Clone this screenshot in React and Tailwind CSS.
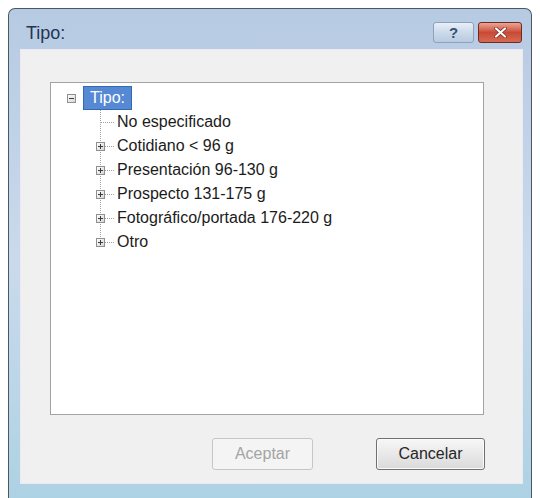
import { useId } from 'react';

const font = { fontFamily: '"Liberation Sans", Arial, sans-serif' };

function ExpandBox({ open = false }) {
  const id = useId();
  return (
    <svg width="9" height="9" viewBox="0 0 9 9" className="shrink-0">
      <defs>
        <linearGradient id={id} x1="0" y1="0" x2="1" y2="1">
          <stop offset="0" stopColor="#ffffff" />
          <stop offset="1" stopColor="#d4d4d4" />
        </linearGradient>
      </defs>
      <rect x="0.5" y="0.5" width="8" height="8" fill={`url(#${id})`} stroke="#8f8f8f" />
      <line x1="2" x2="7" y1="4.5" y2="4.5" stroke="#3c3c3c" />
      {!open && <line x1="4.5" x2="4.5" y1="2" y2="7" stroke="#3c3c3c" />}
    </svg>
  );
}

function Connector({ box, last }) {
  const id = useId();
  return (
    <svg width="28" height="24" viewBox="0 0 28 24" className="shrink-0">
      <defs>
        <linearGradient id={id} x1="0" y1="0" x2="1" y2="1">
          <stop offset="0" stopColor="#ffffff" />
          <stop offset="1" stopColor="#d4d4d4" />
        </linearGradient>
      </defs>
      <line x1="14.5" x2="14.5" y1="0" y2={last ? 12.5 : 24} stroke="#a3a3a3" strokeDasharray="1 1" />
      <line x1={box ? 19 : 15} x2="28" y1="12.5" y2="12.5" stroke="#a3a3a3" strokeDasharray="1 1" />
      {box && (
        <>
          <rect x="10.5" y="8.5" width="8" height="8" fill={`url(#${id})`} stroke="#8f8f8f" />
          <line x1="12" x2="17" y1="12.5" y2="12.5" stroke="#3c3c3c" />
          <line x1="14.5" x2="14.5" y1="10" y2="15" stroke="#3c3c3c" />
        </>
      )}
    </svg>
  );
}

const items = [
  { label: 'No especificado', box: false },
  { label: 'Cotidiano < 96 g', box: true },
  { label: 'Presentación 96-130 g', box: true },
  { label: 'Prospecto 131-175 g', box: true },
  { label: 'Fotográfico/portada 176-220 g', box: true },
  { label: 'Otro', box: true },
];

export default function App() {
  return (
    <div className="h-[498px] w-[540px] overflow-hidden bg-white pl-[8px] pt-[8px]" style={font}>
      <div className="h-[500px] w-[524px] rounded-t-[7px] border border-b-0 border-[#4a5766] bg-gradient-to-b from-[#b6cae2] via-[#cadaec] to-[#acd2e3]">
        {/* title bar */}
        <div className="flex h-[40px] items-start justify-between pl-[17px] pr-[9px]">
          <span className="mt-[14px] text-[18px] leading-[20px] text-[#1f3653]">Tipo:</span>
          <div className="mt-[13px] flex gap-[4px]">
            <div className="flex h-[21px] w-[41px] items-center justify-center rounded-[3px] border border-[#8fa1b8] bg-gradient-to-b from-[#e8eff8] via-[#ccdaeb] to-[#b7cbe1] text-[15px] font-bold leading-none text-[#3a506c]">
              ?
            </div>
            <div className="flex h-[21px] w-[44px] items-center justify-center rounded-[3px] border border-[#6f2b22] bg-gradient-to-b from-[#eaa597] via-[#c84a36] to-[#d66a52]">
              <svg width="13" height="11" viewBox="0 0 13 11">
                <path d="M2 1.5 L11 9.5 M11 1.5 L2 9.5" stroke="#7a2a20" strokeWidth="3.6" strokeLinecap="round" />
                <path d="M2 1.5 L11 9.5 M11 1.5 L2 9.5" stroke="#ffffff" strokeWidth="2.2" strokeLinecap="round" />
              </svg>
            </div>
          </div>
        </div>

        {/* client area */}
        <div className="ml-[11px] flex h-[435px] w-[503px] flex-col border border-[#ebe9f5] bg-[#f0f0f0]">
          <div className="ml-[29px] mt-[32px] h-[333px] w-[434px] border border-[#a3a3a3] bg-white pt-[3px] text-[16px] text-[#1b1b1b]">
            <div className="flex h-[24px] items-center pl-[16px]">
              <ExpandBox open />
              <span className="ml-[7px] flex h-[24px] items-center border border-[#3467b4] bg-[#5689d3] px-[6px] text-white">
                Tipo:
              </span>
            </div>
            {items.map((it, i) => (
              <div key={it.label} className="flex h-[24px] items-center pl-[35px]">
                <Connector box={it.box} last={i === items.length - 1} />
                <span className="ml-[3px] whitespace-nowrap">{it.label}</span>
              </div>
            ))}
          </div>

          <div className="mt-[23px] flex justify-end gap-[63px] pr-[37px] text-[16px]">
            <div className="flex h-[32px] w-[101px] items-center justify-center rounded-[3px] border border-[#c6c6c6] bg-[#f4f4f4] text-[#a4a4a4]">
              Aceptar
            </div>
            <div className="flex h-[32px] w-[109px] items-center justify-center rounded-[3px] border border-[#707070] bg-gradient-to-b from-[#f7f7f7] to-[#dadada] text-[#262626] shadow-[inset_0_0_0_1px_#fbfbfb]">
              Cancelar
            </div>
          </div>
        </div>
      </div>
    </div>
  );
}
